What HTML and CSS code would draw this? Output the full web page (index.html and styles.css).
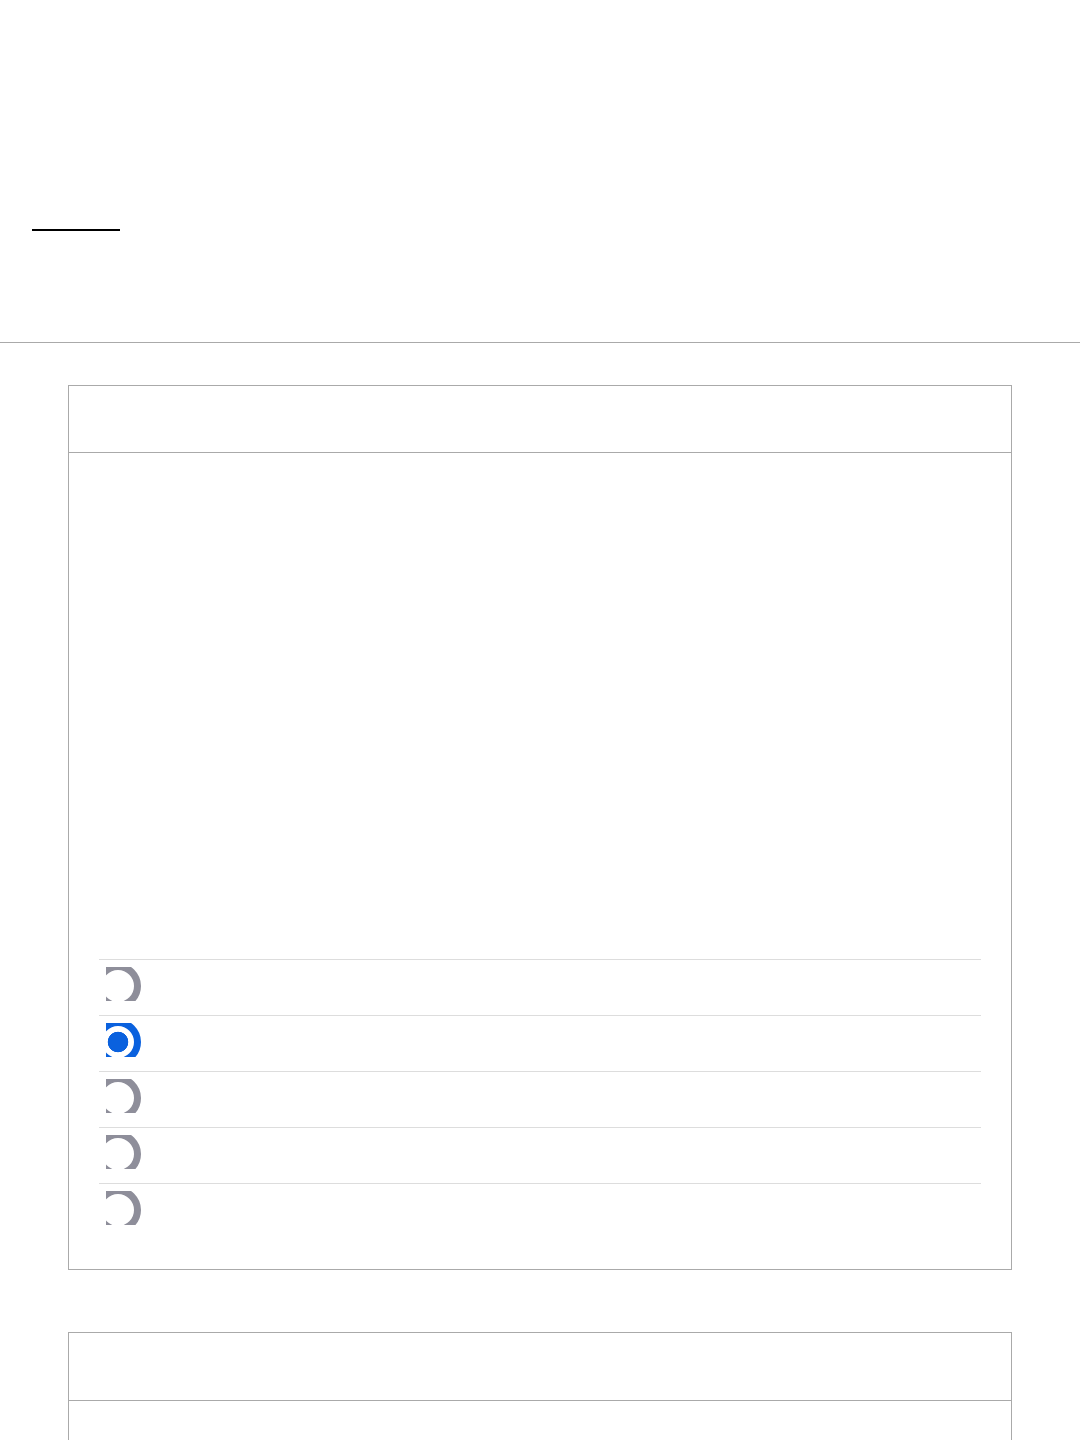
FILE: index.html
```html
<!DOCTYPE html>
<html lang="en">
<head>
    <meta charset="UTF-8">
    <meta name="viewport" content="width=device-width, initial-scale=1.0">
    <title>Options</title>
    <link rel="stylesheet" href="styles.css">
</head>
<body>
    <!-- Top bar with the active tab marker -->
    <header class="topbar">
        <div class="tab-marker"></div>
    </header>

    <main class="content">
        <section class="card">
            <div class="card-head"></div>
            <div class="card-body">
                <div class="card-space"></div>
                <ul class="choice-list">
                    <li class="choice"><span class="radio-box"><span class="radio"></span></span></li>
                    <li class="choice"><span class="radio-box"><span class="radio checked"></span></span></li>
                    <li class="choice"><span class="radio-box"><span class="radio"></span></span></li>
                    <li class="choice"><span class="radio-box"><span class="radio"></span></span></li>
                    <li class="choice"><span class="radio-box"><span class="radio"></span></span></li>
                </ul>
            </div>
        </section>

        <section class="card">
            <div class="card-head card-head-tall"></div>
            <div class="card-body"></div>
        </section>
    </main>
</body>
</html>
```

FILE: styles.css
```css
body {
    font-family: "Liberation Sans", Arial, sans-serif;
    margin: 0;
    padding: 0;
    background-color: #fff;
    color: #000;
}

.topbar {
    height: 343px;
    border-bottom: 1px solid #aaa;
    padding: 229px 0 0 32px;
    box-sizing: border-box;
}

.tab-marker {
    width: 88px;
    height: 2px;
    background-color: #000;
}

.content {
    padding: 42px 68px 0 68px;
}

.card {
    border: 1px solid #aaa;
    margin-bottom: 62px;
}

.card-head {
    height: 66px;
    border-bottom: 1px solid #aaa;
}

.card-head-tall {
    height: 67px;
}

.card-body {
    padding: 30px;
    min-height: 200px;
}

.card-space {
    height: 476px;
}

.choice-list {
    list-style: none;
    margin: 0;
    padding: 0;
}

.choice {
    display: flex;
    height: 48px;
    border-top: 1px solid #ddd;
    padding: 7px 0 0 7px;
}

/* the radio is drawn bigger than its box and clipped */
.radio-box {
    display: block;
    width: 36px;
    height: 34px;
    overflow: hidden;
}

.radio {
    display: block;
    width: 46px;
    height: 46px;
    margin: -4px 0 0 -11px;
    border: 7px solid #8e8e9a;
    border-radius: 50%;
    box-sizing: border-box;
    background-color: #fff;
}

.radio.checked {
    border-color: #0a61de;
    background: radial-gradient(circle, #0a61de 10px, #fff 10.6px);
}
```
